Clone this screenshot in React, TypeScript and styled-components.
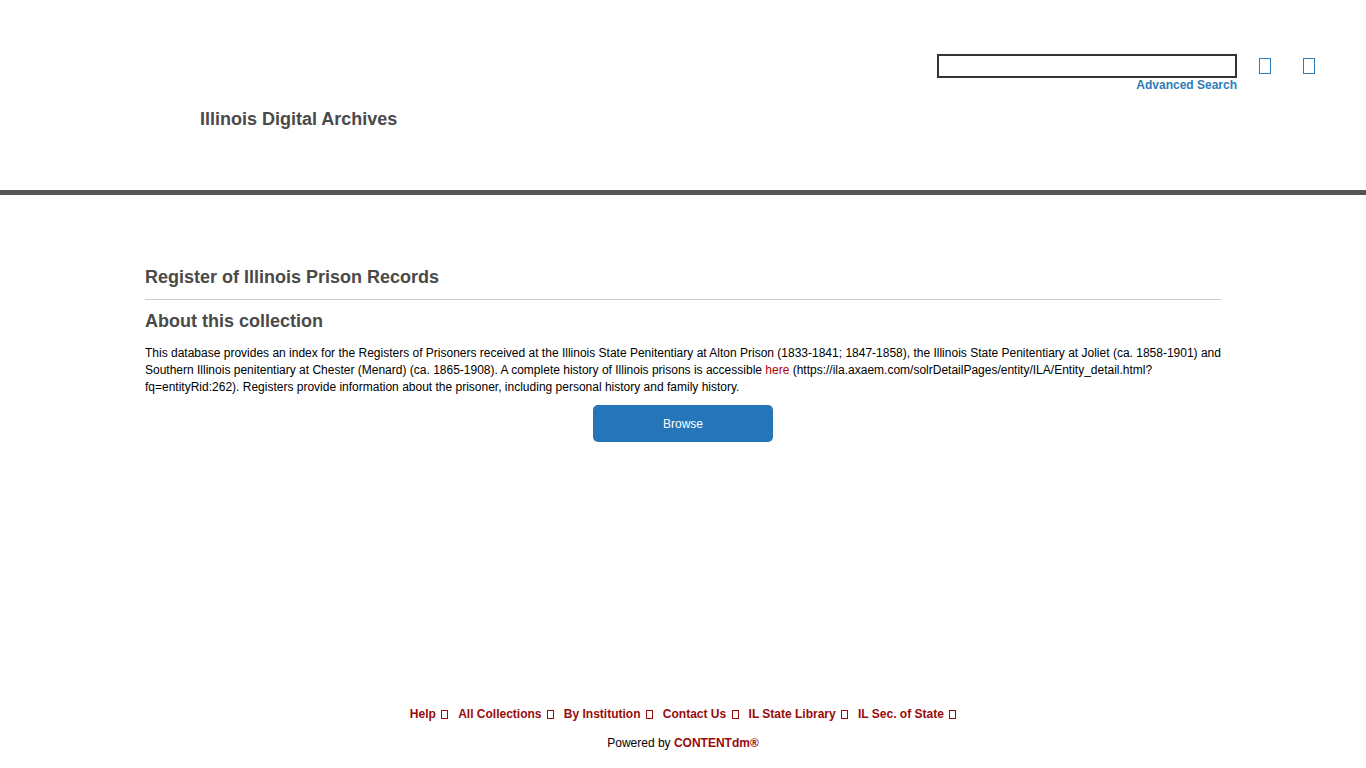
import React from "react";
import styled, { createGlobalStyle } from "styled-components";

const GlobalStyle = createGlobalStyle`
  html, body {
    margin: 0;
    padding: 0;
    background: #fff;
    font-family: "Liberation Sans", Arial, sans-serif;
  }
  #root {
    min-height: 100vh;
  }
`;

const Page = styled.div`
  min-height: 100vh;
  display: flex;
  flex-direction: column;
`;

const Header = styled.header`
  height: 190px;
  border-bottom: 5px solid #555;
  box-sizing: content-box;
  display: flex;
  justify-content: space-between;
  align-items: flex-start;
`;

const SiteTitle = styled.h1`
  margin: 108px 0 0 200px;
  font-size: 18px;
  line-height: 22px;
  font-weight: bold;
  color: #4a4a4a;
`;

const SearchArea = styled.div`
  margin: 54px 51px 0 0;
  display: flex;
  align-items: flex-start;
`;

const SearchColumn = styled.div`
  display: flex;
  flex-direction: column;
  align-items: flex-end;
`;

const SearchInput = styled.input`
  width: 300px;
  height: 24px;
  box-sizing: border-box;
  border: 2px solid #333;
  padding: 0 4px;
  outline: none;
  font-family: inherit;
`;

const AdvancedLink = styled.a`
  margin-top: -1px;
  font-size: 12px;
  line-height: 16px;
  font-weight: bold;
  color: #2f7cb8;
  text-decoration: none;
`;

const IconButton = styled.button<{ $gap: number }>`
  margin-left: ${(p) => p.$gap}px;
  margin-top: 4px;
  padding: 0;
  border: none;
  background: none;
  display: flex;
`;

const Tofu = styled.span<{ $w: number; $h: number; $color: string; $space?: number }>`
  display: inline-block;
  width: ${(p) => p.$w}px;
  height: ${(p) => p.$h}px;
  margin-left: ${(p) => p.$space ?? 0}px;
  box-sizing: border-box;
  border: 1px solid ${(p) => p.$color};
  vertical-align: -1px;
`;

const Main = styled.main`
  width: 1076px;
  margin: 0 auto;
  padding: 72px 0 0 0;
  box-sizing: content-box;
`;

const CollectionTitle = styled.h2`
  margin: 0;
  font-size: 18px;
  line-height: 20px;
  font-weight: bold;
  color: #4a4a4a;
  padding-bottom: 12px;
  border-bottom: 1px solid #ccc;
`;

const SectionTitle = styled.h3`
  margin: 11px 0 0;
  font-size: 18px;
  line-height: 20px;
  font-weight: bold;
  color: #4a4a4a;
`;

const Description = styled.p`
  margin: 14px 0 0;
  font-size: 12px;
  line-height: 17px;
  color: #000;
`;

const InlineLink = styled.a`
  color: #b30000;
  text-decoration: none;
`;

const ButtonRow = styled.div`
  display: flex;
  justify-content: center;
  margin-top: 9px;
`;

const BrowseButton = styled.button`
  width: 180px;
  height: 37px;
  border: none;
  border-radius: 5px;
  background: #2476b9;
  color: #fff;
  font-family: inherit;
  font-size: 12px;
`;

const Footer = styled.footer`
  margin-top: auto;
  padding-bottom: 17px;
  display: flex;
  flex-direction: column;
  align-items: center;
`;

const FooterNav = styled.nav`
  display: flex;
  gap: 10px;
`;

const FooterLink = styled.a`
  font-size: 12px;
  line-height: 16px;
  font-weight: bold;
  color: #990a0a;
  text-decoration: none;
  white-space: nowrap;
`;

const Powered = styled.div`
  margin-top: 13px;
  font-size: 12px;
  line-height: 16px;
  color: #000;
`;

const PoweredLink = styled.a`
  font-weight: bold;
  color: #990a0a;
  text-decoration: none;
`;

const footerLinks = [
  "Help",
  "All Collections",
  "By Institution",
  "Contact Us",
  "IL State Library",
  "IL Sec. of State",
];

export default function App() {
  return (
    <>
      <GlobalStyle />
      <Page>
        <Header>
          <SiteTitle>Illinois Digital Archives</SiteTitle>
          <SearchArea>
            <SearchColumn>
              <SearchInput type="text" aria-label="Search" />
              <AdvancedLink href="#">Advanced Search</AdvancedLink>
            </SearchColumn>
            <IconButton $gap={22} aria-label="Search">
              <Tofu $w={12} $h={16} $color="#2f7cb8" />
            </IconButton>
            <IconButton $gap={32} aria-label="Menu">
              <Tofu $w={12} $h={16} $color="#2f7cb8" />
            </IconButton>
          </SearchArea>
        </Header>

        <Main>
          <CollectionTitle>Register of Illinois Prison Records</CollectionTitle>
          <SectionTitle>About this collection</SectionTitle>
          <Description>
            This database provides an index for the Registers of Prisoners
            received at the Illinois State Penitentiary at Alton Prison
            (1833-1841; 1847-1858), the Illinois State Penitentiary at Joliet
            (ca. 1858-1901) and Southern Illinois penitentiary at Chester
            (Menard) (ca. 1865-1908). A complete history of Illinois prisons is
            accessible <InlineLink href="#">here</InlineLink>{" "}
            (https://ila.axaem.com/solrDetailPages/entity/ILA/Entity_detail.html?
            fq=entityRid:262). Registers provide information about the
            prisoner, including personal history and family history.
          </Description>
          <ButtonRow>
            <BrowseButton>Browse</BrowseButton>
          </ButtonRow>
        </Main>

        <Footer>
          <FooterNav>
            {footerLinks.map((label) => (
              <FooterLink href="#" key={label}>
                {label} <Tofu $w={7} $h={9} $color="#990a0a" $space={2} />
              </FooterLink>
            ))}
          </FooterNav>
          <Powered>
            Powered by <PoweredLink href="#">CONTENTdm®</PoweredLink>
          </Powered>
        </Footer>
      </Page>
    </>
  );
}
